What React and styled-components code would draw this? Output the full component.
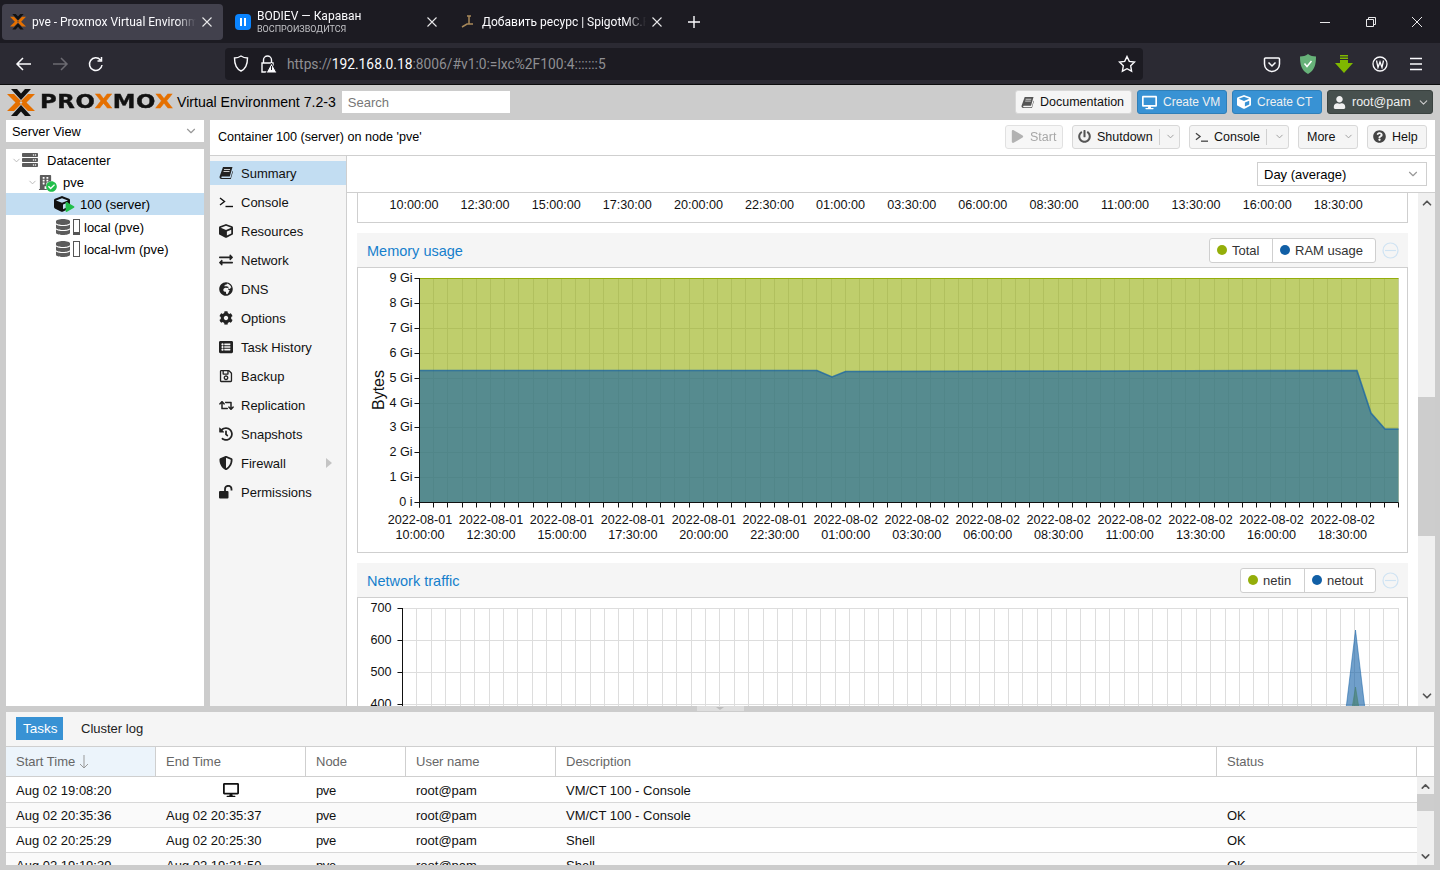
import styled, { createGlobalStyle } from "styled-components";
import {
  FaCube,
  FaExchangeAlt,
  FaGlobeAfrica,
  FaCog,
  FaListAlt,
  FaRegSave,
  FaRetweet,
  FaHistory,
  FaShieldAlt,
  FaDesktop,
  FaPlay,
  FaPowerOff,
  FaQuestionCircle,
  FaUser,
  FaCheckCircle,
  FaDatabase,
  FaServer,
  FaBuilding,
} from "react-icons/fa";
import { LuChevronDown, LuChevronUp } from "react-icons/lu";

const Global = createGlobalStyle`
  html, body { margin: 0; padding: 0; background: #cccccc; }
  * { box-sizing: border-box; }
  body { font-family: "Liberation Sans", Arial, sans-serif; font-size: 13px; color: #000; }
  svg { flex-shrink: 0; }
`;

const Page = styled.div`
  width: 1440px;
  height: 870px;
  overflow: hidden;
  display: flex;
  flex-direction: column;
`;

/* ---------- browser ---------- */
const TabBar = styled.div`
  height: 43px;
  background: #1c1b22;
  display: flex;
  align-items: flex-start;
  padding: 4px 0 0 2px;
  color: #fbfbfe;
  font-family: Roboto, "Noto Sans", sans-serif;
  font-size: 12px;
`;

const BrowserTab = styled.div`
  width: ${(p) => p.$w}px;
  height: 36px;
  flex-shrink: 0;
  border-radius: 4px;
  background: ${(p) => (p.$active ? "#42414d" : "transparent")};
  display: flex;
  align-items: center;
  padding: 0 ${(p) => p.$pr || 11}px 0 ${(p) => p.$pl || 8}px;
  gap: 6px;
  margin-right: ${(p) => p.$mr || 0}px;
`;

const TabIcon = styled.span`
  width: 16px;
  height: 16px;
  flex-shrink: 0;
  display: flex;
  align-items: center;
  justify-content: center;
`;

const TabText = styled.div`
  flex: 1;
  min-width: 0;
  white-space: nowrap;
  overflow: hidden;
  mask-image: linear-gradient(to right, #000 88%, transparent 100%);
`;

const TabSub = styled.div`
  font-size: 9px;
  line-height: 11px;
  color: #c4c4c8;
`;

const TabMain = styled.div`
  line-height: 15px;
`;

const TabClose = styled.svg`
  width: 10px;
  height: 10px;
  flex-shrink: 0;
  stroke: #e8e8ea;
  stroke-width: 1.1;
  fill: none;
`;

const PlusWrap = styled.div`
  width: 20px;
  height: 36px;
  display: flex;
  align-items: center;
  justify-content: center;
`;

const WindowControls = styled.div`
  margin-left: auto;
  height: 36px;
  display: flex;
  align-items: center;
  gap: 36px;
  padding-right: 18px;
`;

const NavBar = styled.div`
  height: 41px;
  background: #2b2a33;
  display: flex;
  align-items: center;
  padding-left: 15px;
`;

const NavIcons = styled.div`
  display: flex;
  align-items: center;
  gap: 18px;
  width: 210px;
`;

const UrlBar = styled.div`
  width: 918px;
  height: 32px;
  background: #1c1b22;
  border-radius: 4px;
  display: flex;
  align-items: center;
  padding: 0 7px 0 8px;
  color: #fbfbfe;
  font-family: Roboto, "Noto Sans", sans-serif;
  font-size: 13.8px;
`;

const UrlText = styled.div`
  margin-left: 10px;
  flex: 1;
  color: #8f8f93;
  & b {
    color: #fbfbfe;
    font-weight: 400;
  }
`;

const NavRight = styled.div`
  display: flex;
  align-items: center;
  gap: 18px;
  margin-left: 120px;
`;

const Rule = styled.div`
  height: 1px;
  background: #0c0c0d;
`;

/* ---------- pve header ---------- */
const Header = styled.div`
  height: 35px;
  display: flex;
  align-items: center;
  padding: 0 7px 1px;
  flex-shrink: 0;
`;

const Logo = styled.div`
  display: flex;
  align-items: center;
  width: 170px;
`;

const LogoWord = styled.span`
  font-family: "DejaVu Sans", sans-serif;
  font-weight: 700;
  font-size: 19.5px;
  line-height: 20px;
  letter-spacing: 0.5px;
  -webkit-text-stroke: 0.4px currentColor;
  color: #111;
  margin-left: 5px;
  transform: scaleX(1.17);
  transform-origin: left center;
  & i {
    font-style: normal;
    color: #e57000;
  }
`;

const Version = styled.div`
  font-size: 14.1px;
  margin-right: 6px;
  white-space: nowrap;
`;

const SearchBox = styled.div`
  width: 168px;
  height: 22px;
  background: #fff;
  color: #777;
  padding: 0 6px;
  font-size: 13px;
  line-height: 23px;
`;

const HeaderRight = styled.div`
  margin-left: auto;
  display: flex;
  gap: 5px;
`;

const TopBtn = styled.div`
  width: ${(p) => p.$w}px;
  height: 24px;
  border-radius: 3px;
  border: 1px solid ${(p) => (p.$kind === "blue" ? "#2f7fb8" : p.$kind === "dark" ? "#3a4240" : "#d8d8d8")};
  background: ${(p) => (p.$kind === "blue" ? "#3892d4" : p.$kind === "dark" ? "#47504e" : "#f5f5f5")};
  color: ${(p) => (p.$kind ? "#f0f0f0" : "#111")};
  display: flex;
  align-items: center;
  padding: 0 4px 0 ${(p) => (p.$kind === "blue" ? 4 : 5)}px;
  gap: 6px;
  font-size: ${(p) => (p.$kind === "blue" ? "12px" : "12.5px")};
  white-space: nowrap;
`;

const Caret = styled.span`
  display: inline-flex;
  margin-left: auto;
  color: ${(p) => p.$c || "#999"};
`;

/* ---------- workspace ---------- */
const Workspace = styled.div`
  flex-shrink: 0;
  height: 586px;
  display: flex;
  padding: 0 5px 0 6px;
  gap: 6px;
`;

const LeftCol = styled.div`
  width: 198px;
  display: flex;
  flex-direction: column;
  gap: 7px;
  flex-shrink: 0;
`;

const ViewSelect = styled.div`
  height: 22px;
  background: #fff;
  display: flex;
  align-items: center;
  padding: 0 6px;
  font-size: 12.8px;
`;

const Tree = styled.div`
  flex: 1;
  background: #fff;
`;

const TreeRow = styled.div`
  height: 22px;
  display: flex;
  align-items: center;
  padding-left: ${(p) => p.$indent}px;
  background: ${(p) => (p.$sel ? "#c2ddf2" : "transparent")};
  margin-top: ${(p) => (p.$gap ? 1 : 0)}px;
  font-size: 13px;
  white-space: nowrap;
`;

const Twisty = styled.span`
  width: 11px;
  display: inline-flex;
  color: #b5b5b5;
`;

const TreeIcon = styled.span`
  position: relative;
  display: inline-flex;
  align-items: center;
  width: ${(p) => p.$w}px;
  color: #5c5c5c;
`;

const Badge = styled.span`
  position: absolute;
  display: inline-flex;
  color: ${(p) => p.$c};
  right: ${(p) => p.$r}px;
  bottom: ${(p) => p.$b}px;
  background: ${(p) => p.$bg || "transparent"};
  border-radius: 50%;
`;

const StorageBar = styled.span`
  width: 7px;
  height: 16px;
  border: 1px solid #555;
  background: ${(p) => (p.$used ? "linear-gradient(to top, #555 2px, #fff 2px)" : "#fff")};
  margin-left: 3px;
  margin-right: 4px;
  display: inline-block;
`;

const MainPanel = styled.div`
  width: 1225px;
  background: #fff;
  display: flex;
  flex-direction: column;
`;

const MainToolbar = styled.div`
  height: 36px;
  flex-shrink: 0;
  border-bottom: 1px solid #cfcfcf;
  display: flex;
  align-items: center;
  padding: 0 8px 2px 8px;
  font-size: 13px;
`;

const ToolTitle = styled.div`
  margin-right: auto;
  font-size: 12.6px;
`;

const ToolBtn = styled.div`
  width: ${(p) => p.$w}px;
  height: 24px;
  border: 1px solid #d8d8d8;
  border-radius: 3px;
  background: #f5f5f5;
  color: ${(p) => (p.$off ? "#8a8a8a" : "#111")};
  margin-left: 9px;
  display: flex;
  align-items: center;
  padding: 0 3px 0 ${(p) => p.$pl || 5}px;
  gap: 6px;
  font-size: 12.5px;
  white-space: nowrap;
  opacity: ${(p) => (p.$off ? 0.75 : 1)};
`;

const BtnSep = styled.span`
  width: 1px;
  height: 16px;
  background: #d0d0d0;
  margin-left: auto;
`;

const MainBody = styled.div`
  flex: 1;
  min-height: 0;
  display: flex;
`;

const SideNav = styled.div`
  width: 137px;
  flex-shrink: 0;
  background: #f5f5f5;
  border-right: 1px solid #cfcfcf;
  padding-top: 5px;
  display: flex;
  flex-direction: column;
  gap: 5px;
`;

const NavItem = styled.div`
  height: 24px;
  flex-shrink: 0;
  background: ${(p) => (p.$sel ? "#c2ddf2" : "transparent")};
  display: flex;
  align-items: center;
  padding-left: 9px;
  font-size: 13px;
  color: #111;
  position: relative;
`;

const NavGlyph = styled.span`
  width: 22px;
  display: inline-flex;
  color: #222;
`;

const NavArrow = styled.span`
  position: absolute;
  right: 14px;
  top: 7px;
  width: 0;
  height: 0;
  border-left: 6px solid #c4c4c4;
  border-top: 5px solid transparent;
  border-bottom: 5px solid transparent;
`;

const ContentCol = styled.div`
  flex: 1;
  min-width: 0;
  display: flex;
  flex-direction: column;
`;

const RangeRow = styled.div`
  height: 37px;
  flex-shrink: 0;
  border-bottom: 1px solid #cfcfcf;
  display: flex;
  align-items: center;
  justify-content: flex-end;
  padding: 0 8px 0 0;
`;

const RangeSelect = styled.div`
  width: 170px;
  height: 24px;
  border: 1px solid #cfcfcf;
  background: #fff;
  display: flex;
  align-items: center;
  padding: 0 6px;
  font-size: 13px;
`;

const ScrollArea = styled.div`
  flex: 1;
  min-height: 0;
  display: flex;
  overflow: hidden;
`;

const Charts = styled.div`
  width: 1071px;
  flex-shrink: 0;
  padding-left: 10px;
  padding-right: 10px;
  display: flex;
  flex-direction: column;
`;

const StubBody = styled.div`
  height: 30px;
  flex-shrink: 0;
  border: 1px solid #cfcfcf;
  border-top: 0;
`;

const ChartHead = styled.div`
  height: 34px;
  flex-shrink: 0;
  margin-top: 10px;
  background: #f5f5f5;
  display: flex;
  align-items: center;
  padding-left: 10px;
  padding-right: 9px;
  color: #157fcc;
  font-size: 14.5px;
`;

const ChartTitle = styled.div`
  margin-right: auto;
  padding-top: 2px;
`;

const Legend = styled.div`
  display: flex;
  height: 25px;
  border: 1px solid #cfcfcf;
  border-radius: 3px;
  background: #fff;
  margin-right: 6px;
`;

const LegendItem = styled.div`
  width: ${(p) => p.$w}px;
  display: flex;
  align-items: center;
  gap: 5px;
  padding-left: 7px;
  color: #333;
  font-size: 13px;
  & + & {
    border-left: 1px solid #cfcfcf;
  }
`;

const Dot = styled.span`
  width: 10px;
  height: 10px;
  border-radius: 50%;
  background: ${(p) => p.$c};
`;

const ChartBody = styled.div`
  flex-shrink: 0;
  height: ${(p) => p.$h}px;
  border: 1px solid #cfcfcf;
`;

const ChartSvg = styled.svg`
  display: block;
  font-family: "Liberation Sans", sans-serif;
  font-size: 12.6px;
  fill: #111;
`;

const Scrollbar = styled.div`
  width: 17px;
  flex-shrink: 0;
  background: #f0f0f0;
  display: flex;
  flex-direction: column;
  align-items: center;
  justify-content: space-between;
  position: relative;
  color: #555;
  padding: ${(p) => p.$pad};
`;

const Thumb = styled.div`
  position: absolute;
  left: 0;
  right: 0;
  top: ${(p) => p.$top}px;
  height: ${(p) => p.$h}px;
  background: #cdcdcd;
`;

/* ---------- splitter + tasks ---------- */
const Splitter = styled.div`
  height: 6px;
  flex-shrink: 0;
  position: relative;
`;

const SplitHandle = styled.div`
  position: absolute;
  left: 697px;
  top: 0;
  width: 47px;
  height: 5px;
  background: #dedede;
  &::after {
    content: "";
    position: absolute;
    left: 19px;
    top: 1px;
    border-top: 3px solid #bdbdbd;
    border-left: 4px solid transparent;
    border-right: 4px solid transparent;
  }
`;

const Tasks = styled.div`
  height: 153px;
  flex-shrink: 0;
  margin: 0 6px;
  background: #fff;
  display: flex;
  flex-direction: column;
  overflow: hidden;
`;

const TaskTabs = styled.div`
  height: 35px;
  flex-shrink: 0;
  background: #f5f5f5;
  border-bottom: 1px solid #cfcfcf;
  display: flex;
  align-items: flex-start;
  padding: 5px 0 0 10px;
`;

const TaskTab = styled.div`
  height: 23px;
  line-height: 24px;
  width: ${(p) => (p.$active ? "47px" : "auto")};
  padding: 0 ${(p) => (p.$active ? 7 : 18)}px;
  background: ${(p) => (p.$active ? "#3892d4" : "transparent")};
  color: ${(p) => (p.$active ? "#fff" : "#222")};
  font-size: ${(p) => (p.$active ? "13.5px" : "13px")};
`;

const GridHead = styled.div`
  height: 30px;
  flex-shrink: 0;
  display: grid;
  grid-template-columns: 150px 150px 100px 150px 661px 200px 17px;
  border-bottom: 1px solid #cfcfcf;
`;

const HeadCell = styled.div`
  border-right: 1px solid #cfcfcf;
  background: ${(p) => (p.$sorted ? "#ecf4fb" : "#fff")};
  color: #666;
  padding: 0 10px;
  display: flex;
  align-items: center;
  gap: 4px;
  font-size: 13px;
`;

const GridWrap = styled.div`
  flex: 1;
  min-height: 0;
  display: flex;
  overflow: hidden;
`;

const Rows = styled.div`
  width: 1411px;
  flex-shrink: 0;
`;

const Row = styled.div`
  display: grid;
  grid-template-columns: 150px 150px 100px 150px 661px 200px;
  height: ${(p) => p.$h}px;
  padding-top: ${(p) => p.$h - 25}px;
  background: ${(p) => (p.$alt ? "#fafafa" : "#fff")};
  border-bottom: 1px solid #d8d8d8;
  align-items: center;
  font-size: 13px;
  color: #111;
`;

const Cell = styled.div`
  padding: 0 10px;
  white-space: nowrap;
  display: flex;
  justify-content: ${(p) => (p.$center ? "center" : "flex-start")};
  letter-spacing: ${(p) => (p.$tight ? "-0.4px" : "0")};
`;

const ICON = 14;

const XMark = () => (
  <TabClose viewBox="0 0 10 10">
    <path d="M.5.5l9 9M9.5.5l-9 9" />
  </TabClose>
);

const ProxmoxMark = ({ size = 28 }) => (
  <svg width={size} height={(size * 27) / 28} viewBox="0 0 28 27">
    <path d="M0 5h7l8.500 8.500L7 22H0l8.500-8.500zM28 5h-7l-8.500 8.500L21 22h7l-8.500-8.500z" fill="#e57000" />
    <path d="M4 0h6l4 4.500L18 0h6L14 11zM4 27h6l4-4.500 4 4.500h6L14 16z" fill="#111" />
  </svg>
);

const BookGlyph = ({ color = "#222", size = 14 }) => (
  <svg width={size} height={size} viewBox="0 0 14 14" fill={color}>
    <path d="M4 1h9.500l-2.700 9.500H3c-.8 0-1 1.500 0 1.500h8.500l2-7 .5.500-2.200 7.500H2.500C1 13 .3 11.700.6 10.500z" />
    <path d="M5 3.500h6M4.500 5.500h6" stroke="#f5f5f5" strokeWidth=".8" />
  </svg>
);

const UnlockGlyph = () => (
  <svg width="14" height="14" viewBox="0 0 14 14">
    <rect x="0" y="6" width="9.500" height="7.500" rx="1" fill="#222" />
    <path d="M6 6V4a3.200 3.200 0 0 1 6.500 0v1.500" fill="none" stroke="#222" strokeWidth="1.800" />
  </svg>
);

const TerminalGlyph = ({ color = "#111", width = 14 }) => (
  <svg width={width} height="12" viewBox="0 0 14 12" fill="none" stroke={color} strokeWidth="1.400">
    <path d="M1 2l4.500 3.500L1 9" />
    <path d="M6.500 10.500H14" />
  </svg>
);

const navItems = [
  ["Summary", <BookGlyph />],
  ["Console", <TerminalGlyph />],
  ["Resources", <FaCube size={ICON} />],
  ["Network", <FaExchangeAlt size={ICON} />],
  ["DNS", <FaGlobeAfrica size={ICON} />],
  ["Options", <FaCog size={ICON} />],
  ["Task History", <FaListAlt size={ICON} />],
  ["Backup", <FaRegSave size={ICON} />],
  ["Replication", <FaRetweet size={15} />],
  ["Snapshots", <FaHistory size={ICON} />],
  ["Firewall", <FaShieldAlt size={ICON} />],
  ["Permissions", <UnlockGlyph />],
];

const times = [
  "10:00:00", "12:30:00", "15:00:00", "17:30:00", "20:00:00", "22:30:00", "01:00:00",
  "03:30:00", "06:00:00", "08:30:00", "11:00:00", "13:30:00", "16:00:00", "18:30:00",
];

// page x of the chart panel's inner edge, svg coordinates start there
const OX = 358;

const ticks = (from, step) =>
  Array.from({ length: 70 }, (_, i) => Math.round(from + step * i) + 0.5);

const GRID = "#dddddd";

const MemoryChart = () => {
  const x0 = 61.5;
  const xs = ticks(61, 14.19);
  const right = xs[69];
  const y = (g) => Math.round(10 + (9 - g) * 24.9) + 0.5;
  const ram = [
    [x0, 102.5], [817 - OX, 102.5], [832 - OX, 109], [845.5 - OX, 103.5], [1100 - OX, 103], [1357 - OX, 102.5],
    [1371 - OX, 145], [1385 - OX, 161], [right, 161],
  ];
  const pts = ram.map((p) => p.join(",")).join(" ");
  const bottom = 234.5;
  return (
    <ChartSvg width="1049" height="284" viewBox="0 0 1049 284">
      {xs.map((x) => (
        <line key={x} x1={x} x2={x} y1={10} y2={bottom} stroke={GRID} />
      ))}
      {[0, 1, 2, 3, 4, 5, 6, 7, 8, 9].map((g) => (
        <line key={g} x1={x0 - 5} x2={right} y1={y(g)} y2={y(g)} stroke={GRID} />
      ))}
      <polygon points={`${x0},10.5 ${right},10.5 ${right},${bottom} ${x0},${bottom}`} fill="#94ae0a" fillOpacity="0.6" />
      <line x1={x0} x2={right} y1={10.5} y2={10.5} stroke="#94ae0a" />
      <polygon points={`${x0},${bottom} ${pts} ${right},${bottom}`} fill="#115fa6" fillOpacity="0.6" />
      <polyline points={pts} fill="none" stroke="#115fa6" strokeOpacity="0.7" strokeWidth="1.6" />
      <line x1={x0} x2={right} y1={bottom} y2={bottom} stroke="#111" />
      <line x1={x0} x2={x0} y1={10} y2={bottom + 5} stroke="#111" />
      {xs.map((x) => (
        <line key={x} x1={x} x2={x} y1={bottom} y2={bottom + 5} stroke="#111" />
      ))}
      {[0, 1, 2, 3, 4, 5, 6, 7, 8, 9].map((g) => (
        <g key={g}>
          <line x1={x0 - 5} x2={x0} y1={y(g)} y2={y(g)} stroke="#111" />
          <text x={x0 - 7} y={y(g) + 3} textAnchor="end">{g === 0 ? "0 i" : `${g} Gi`}</text>
        </g>
      ))}
      <text transform="translate(26 122) rotate(-90)" textAnchor="middle" fontSize="16">Bytes</text>
      {times.map((t, i) => (
        <g key={i} textAnchor="middle">
          <text x={62 + 70.96 * i} y={256}>{i < 6 ? "2022-08-01" : "2022-08-02"}</text>
          <text x={62 + 70.96 * i} y={271}>{t}</text>
        </g>
      ))}
    </ChartSvg>
  );
};

const NetworkChart = () => {
  const x0 = 44.5;
  const xs = ticks(44, 14.43);
  const right = xs[69];
  const y = (v) => 10.5 + ((700 - v) / 100) * 32;
  const sx = 1355.5 - OX;
  return (
    <ChartSvg width="1049" height="238" viewBox="0 0 1049 238">
      {xs.map((x) => (
        <line key={x} x1={x} x2={x} y1={10} y2={238} stroke={GRID} />
      ))}
      {[700, 600, 500, 400, 300].map((v) => (
        <line key={v} x1={x0 - 5} x2={right} y1={y(v)} y2={y(v)} stroke={GRID} />
      ))}
      <polygon points={`${sx - 10},150 ${sx},89 ${sx + 10},150`} fill="#94ae0a" fillOpacity="0.6" stroke="#94ae0a" strokeOpacity="0.5" />
      <polygon points={`${sx - 20},198 ${sx},32 ${sx + 20},198`} fill="#115fa6" fillOpacity="0.6" stroke="#115fa6" strokeOpacity="0.5" />
      <line x1={x0} x2={x0} y1={10} y2={238} stroke="#111" />
      {[700, 600, 500, 400].map((v) => (
        <g key={v}>
          <line x1={x0 - 5} x2={x0} y1={y(v)} y2={y(v)} stroke="#111" />
          <text x={x0 - 11} y={y(v) + 3} textAnchor="end">{v}</text>
        </g>
      ))}
    </ChartSvg>
  );
};

const CollapseCircle = () => (
  <svg width="17" height="17" viewBox="0 0 17 17" fill="none" stroke="#cfe3f3" strokeWidth="1.2">
    <circle cx="8.5" cy="8.5" r="7.5" />
    <path d="M3 8.5h11" />
  </svg>
);

const taskRows = [
  ["Aug 02 19:08:20", null, "pve", "root@pam", "VM/CT 100 - Console", "", 26],
  ["Aug 02 20:35:36", "Aug 02 20:35:37", "pve", "root@pam", "VM/CT 100 - Console", "OK", 25],
  ["Aug 02 20:25:29", "Aug 02 20:25:30", "pve", "root@pam", "Shell", "OK", 25],
  ["Aug 02 19:19:39", "Aug 02 19:21:50", "pve", "root@pam", "Shell", "OK", 25],
];

export default function App() {
  return (
    <Page>
      <Global />
      <TabBar>
        <BrowserTab $w={221} $active $mr={2}>
          <TabIcon><ProxmoxMark size={16} /></TabIcon>
          <TabText>pve - Proxmox Virtual Environment</TabText>
          <XMark />
        </BrowserTab>
        <BrowserTab $w={219} $mr={8} $pl={10} $pr={7}>
          <TabIcon>
            <svg width="16" height="16" viewBox="0 0 16 16">
              <rect width="16" height="16" rx="4" fill="#0a84ff" />
              <path d="M5 4h2v8H5zM9 4h2v8H9z" fill="#fff" />
            </svg>
          </TabIcon>
          <TabText>
            <TabMain>BODIEV — Караван</TabMain>
            <TabSub>ВОСПРОИЗВОДИТСЯ</TabSub>
          </TabText>
          <XMark />
        </BrowserTab>
        <BrowserTab $w={221} $mr={11}>
          <TabIcon>
            <svg width="16" height="16" viewBox="0 0 16 16" fill="none" stroke="#a8895a" strokeWidth="1.5">
              <path d="M7 2h4M9 2v8M2 13l5-3h6" />
            </svg>
          </TabIcon>
          <TabText>Добавить ресурс | SpigotMC.Ru</TabText>
          <XMark />
        </BrowserTab>
        <PlusWrap>
          <svg width="12" height="12" viewBox="0 0 12 12" stroke="#fbfbfe" strokeWidth="1.4">
            <path d="M6 0v12M0 6h12" />
          </svg>
        </PlusWrap>
        <WindowControls>
          <svg width="10" height="10" viewBox="0 0 10 10" stroke="#e8e8ea"><path d="M0 5.5h10" /></svg>
          <svg width="10" height="10" viewBox="0 0 10 10" stroke="#e8e8ea" fill="none">
            <path d="M.5 2.5h7v7h-7zM2.5 2.5v-2h7v7h-2" />
          </svg>
          <svg width="10" height="10" viewBox="0 0 10 10" stroke="#e8e8ea"><path d="M0 0l10 10M10 0L0 10" /></svg>
        </WindowControls>
      </TabBar>
      <NavBar>
        <NavIcons>
          <svg width="18" height="16" viewBox="0 0 18 16" fill="none" stroke="#fbfbfe" strokeWidth="1.5">
            <path d="M16 8H2M8 2L2 8l6 6" />
          </svg>
          <svg width="18" height="16" viewBox="0 0 18 16" fill="none" stroke="#6c6b72" strokeWidth="1.5">
            <path d="M2 8h14M10 2l6 6-6 6" />
          </svg>
          <svg width="18" height="16" viewBox="0 0 18 16" fill="none" stroke="#fbfbfe" strokeWidth="1.5">
            <path d="M13.5 4A6.3 6.3 0 1 0 15 9M14.5 1v4h-4" />
          </svg>
        </NavIcons>
        <UrlBar>
          <svg width="16" height="17" viewBox="0 0 16 17" fill="none" stroke="#fbfbfe" strokeWidth="1.4">
            <path d="M8 1c2 1.400 4 2 6.500 2 0 6-1 10.500-6.500 13C2.500 13.500 1.500 9 1.500 3 4 3 6 2.400 8 1z" />
          </svg>
          <svg style={{ marginLeft: 11 }} width="17" height="18" viewBox="0 0 17 18">
            <path d="M3.500 8V5a4 4 0 0 1 8 0v3M2 8h11v9H2z" fill="none" stroke="#fbfbfe" strokeWidth="1.400" />
            <path d="M11.500 8l5.500 10H6z" fill="#fbfbfe" stroke="#1c1b22" />
            <path d="M11 11h1v4h-1z" fill="#1c1b22" />
          </svg>
          <UrlText>https://<b>192.168.0.18</b>:8006/#v1:0:=lxc%2F100:4:::::::5</UrlText>
          <svg width="18" height="18" viewBox="0 0 18 18" fill="none" stroke="#fbfbfe" strokeWidth="1.400">
            <path d="M9 1.500l2.300 4.900 5.200.7-3.800 3.700.9 5.400L9 13.700l-4.600 2.500.9-5.400L1.500 7.100l5.200-.7z" />
          </svg>
        </UrlBar>
        <NavRight>
          <svg width="18" height="18" viewBox="0 0 18 18" fill="none" stroke="#fbfbfe" strokeWidth="1.500">
            <path d="M2.500 3h13a1 1 0 0 1 1 1v5a7.500 7.500 0 0 1-15 0V4a1 1 0 0 1 1-1z" />
            <path d="M5.500 7.500L9 11l3.500-3.500" />
          </svg>
          <svg width="18" height="20" viewBox="0 0 18 20">
            <path d="M9 0c2.500 1.800 5 2.500 8 2.500 0 8-1.500 14-8 17.500C2.500 16.500 1 10.500 1 2.500 4 2.500 6.500 1.800 9 0z" fill="#67b279" />
            <path d="M5.500 9.500L8 12.500l4.500-5.500" fill="none" stroke="#fff" strokeWidth="1.500" />
          </svg>
          <svg width="18" height="18" viewBox="0 0 18 18" fill="#7fb800">
            <path d="M5 0h8v1.500H5zM5 2.500h8V4H5zM5 5h8v3h5l-9 10L0 8h5z" />
          </svg>
          <svg width="18" height="18" viewBox="0 0 18 18" fill="none" stroke="#fbfbfe" strokeWidth="1.300">
            <circle cx="9" cy="9" r="7" />
            <path d="M5.500 5.500L7 12.500 9 7l2 5.500 1.500-7" />
          </svg>
          <svg width="18" height="18" viewBox="0 0 18 18" stroke="#fbfbfe" strokeWidth="1.500">
            <path d="M3 3.500h12M3 9h12M3 14.500h12" />
          </svg>
        </NavRight>
      </NavBar>
      <Rule />

      <Header>
        <Logo>
          <ProxmoxMark />
          <LogoWord>PRO<i>X</i>MO<i>X</i></LogoWord>
        </Logo>
        <Version>Virtual Environment 7.2-3</Version>
        <SearchBox>Search</SearchBox>
        <HeaderRight>
          <TopBtn $w={117}><BookGlyph size={13} color="#555" /> Documentation</TopBtn>
          <TopBtn $w={90} $kind="blue"><FaDesktop size={15} color="#fff" /> Create VM</TopBtn>
          <TopBtn $w={90} $kind="blue"><FaCube size={14} color="#fff" /> Create CT</TopBtn>
          <TopBtn $w={106} $kind="dark">
            <FaUser size={13} color="#f0f0f0" /> root@pam
            <Caret $c="#ccc"><LuChevronDown size={13} /></Caret>
          </TopBtn>
        </HeaderRight>
      </Header>

      <Workspace>
        <LeftCol>
          <ViewSelect>
            Server View
            <Caret><LuChevronDown size={14} /></Caret>
          </ViewSelect>
          <Tree>
            <TreeRow $indent={5}>
              <Twisty><LuChevronDown size={11} /></Twisty>
              <TreeIcon $w={25}><FaServer size={16} /></TreeIcon>
              Datacenter
            </TreeRow>
            <TreeRow $indent={21}>
              <Twisty><LuChevronDown size={11} /></Twisty>
              <TreeIcon $w={25}>
                <FaBuilding size={15} />
                <Badge $c="#21bf4b" $r={6} $b={-2} $bg="#fff"><FaCheckCircle size={11} /></Badge>
              </TreeIcon>
              pve
            </TreeRow>
            <TreeRow $indent={48} $sel>
              <TreeIcon $w={26}>
                <FaCube size={16} color="#111" />
                <Badge $c="#21bf4b" $r={5} $b={0}><FaPlay size={10} /></Badge>
              </TreeIcon>
              100 (server)
            </TreeRow>
            <TreeRow $indent={49} $gap>
              <TreeIcon $w={15}><FaDatabase size={16} /></TreeIcon>
              <StorageBar $used />
              local (pve)
            </TreeRow>
            <TreeRow $indent={49}>
              <TreeIcon $w={15}><FaDatabase size={16} /></TreeIcon>
              <StorageBar />
              local-lvm (pve)
            </TreeRow>
          </Tree>
        </LeftCol>

        <MainPanel>
          <MainToolbar>
            <ToolTitle>Container 100 (server) on node 'pve'</ToolTitle>
            <ToolBtn $w={58} $off><FaPlay size={13} color="#999" /> Start</ToolBtn>
            <ToolBtn $w={108}>
              <FaPowerOff size={13} color="#555" /> Shutdown
              <BtnSep />
              <Caret><LuChevronDown size={11} /></Caret>
            </ToolBtn>
            <ToolBtn $w={100}>
              <TerminalGlyph color="#444" width={13} /> Console
              <BtnSep />
              <Caret><LuChevronDown size={11} /></Caret>
            </ToolBtn>
            <ToolBtn $w={60} $pl={8}>
              More
              <Caret><LuChevronDown size={11} /></Caret>
            </ToolBtn>
            <ToolBtn $w={60}><FaQuestionCircle size={13} color="#444" /> Help</ToolBtn>
          </MainToolbar>
          <MainBody>
            <SideNav>
              {navItems.map(([label, icon], i) => (
                <NavItem key={label} $sel={i === 0}>
                  <NavGlyph>{icon}</NavGlyph>
                  {label}
                  {label === "Firewall" && <NavArrow />}
                </NavItem>
              ))}
            </SideNav>
            <ContentCol>
              <RangeRow>
                <RangeSelect>
                  Day (average)
                  <Caret><LuChevronDown size={14} /></Caret>
                </RangeSelect>
              </RangeRow>
              <ScrollArea>
                <Charts>
                  <StubBody>
                    <ChartSvg width="1049" height="28" viewBox="0 0 1049 28">
                      {times.map((t, i) => (
                        <text key={i} x={56 + 71.1 * i} y={16} textAnchor="middle">{t}</text>
                      ))}
                    </ChartSvg>
                  </StubBody>
                  <ChartHead>
                    <ChartTitle>Memory usage</ChartTitle>
                    <Legend>
                      <LegendItem $w={62}><Dot $c="#94ae0a" /> Total</LegendItem>
                      <LegendItem $w={103}><Dot $c="#115fa6" /> RAM usage</LegendItem>
                    </Legend>
                    <CollapseCircle />
                  </ChartHead>
                  <ChartBody $h={286}><MemoryChart /></ChartBody>
                  <ChartHead>
                    <ChartTitle>Network traffic</ChartTitle>
                    <Legend>
                      <LegendItem $w={63}><Dot $c="#94ae0a" /> netin</LegendItem>
                      <LegendItem $w={71}><Dot $c="#115fa6" /> netout</LegendItem>
                    </Legend>
                    <CollapseCircle />
                  </ChartHead>
                  <ChartBody $h={240}><NetworkChart /></ChartBody>
                </Charts>
                <Scrollbar $pad="3px 0 3px">
                  <LuChevronUp size={14} strokeWidth={3} />
                  <Thumb $top={204} $h={139} />
                  <LuChevronDown size={14} strokeWidth={3} />
                </Scrollbar>
              </ScrollArea>
            </ContentCol>
          </MainBody>
        </MainPanel>
      </Workspace>

      <Splitter><SplitHandle /></Splitter>

      <Tasks>
        <TaskTabs>
          <TaskTab $active>Tasks</TaskTab>
          <TaskTab>Cluster log</TaskTab>
        </TaskTabs>
        <GridHead>
          <HeadCell $sorted>
            Start Time
            <svg width="10" height="14" viewBox="0 0 10 14" fill="none" stroke="#999">
              <path d="M5 0v13M1 9l4 4 4-4" />
            </svg>
          </HeadCell>
          <HeadCell>End Time</HeadCell>
          <HeadCell>Node</HeadCell>
          <HeadCell>User name</HeadCell>
          <HeadCell>Description</HeadCell>
          <HeadCell>Status</HeadCell>
          <span />
        </GridHead>
        <GridWrap>
          <Rows>
            {taskRows.map((r, i) => (
              <Row key={r[0]} $h={r[6]} $alt={i % 2 === 1}>
                <Cell>{r[0]}</Cell>
                <Cell $center={!r[1]}>{r[1] || <FaDesktop size={16} color="#111" />}</Cell>
                <Cell $tight>{r[2]}</Cell>
                <Cell>{r[3]}</Cell>
                <Cell>{r[4]}</Cell>
                <Cell>{r[5]}</Cell>
              </Row>
            ))}
          </Rows>
          <Scrollbar $pad="3px 0 2px">
            <LuChevronUp size={13} strokeWidth={3} />
            <Thumb $top={17} $h={17} />
            <LuChevronDown size={13} strokeWidth={3} />
          </Scrollbar>
        </GridWrap>
      </Tasks>
    </Page>
  );
}
